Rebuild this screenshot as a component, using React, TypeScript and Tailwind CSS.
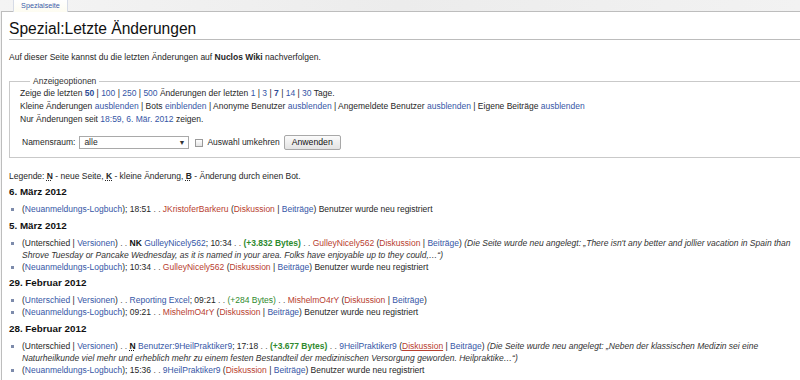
import React from "react"

const Blue = ({ children }: { children: React.ReactNode }) => (
  <a className="text-[#3556a6]">{children}</a>
)
const Red = ({ children, u }: { children: React.ReactNode; u?: boolean }) => (
  <a className={u ? "text-[#b8402f] underline" : "text-[#b8402f]"}>{children}</a>
)
const Sep = () => <span className="text-[#555]"> . . </span>

function Item({ children }: { children: React.ReactNode }) {
  return (
    <li className="flex">
      <span className="w-[13px] shrink-0">
        <span className="block w-[3px] h-[3px] ml-[2px] mt-[5px] bg-[#7d8bab]" />
      </span>
      <span className="whitespace-nowrap">{children}</span>
    </li>
  )
}

function Day({ title, children }: { title: string; children: React.ReactNode }) {
  return (
    <div>
      <h4 className="text-[9.8px] font-bold leading-[14px] mt-[3.5px] mb-[4px] text-[#111]">{title}</h4>
      <ul className="leading-[12px]">{children}</ul>
    </div>
  )
}

const Logbuch = ({ time, user, userRed = true }: { time: string; user: string; userRed?: boolean }) => (
  <Item>
    (<Blue>Neuanmeldungs-Logbuch</Blue>); {time}
    <Sep />
    {userRed ? <Red>{user}</Red> : <Blue>{user}</Blue>} (<Red>Diskussion</Red> | <Blue>Beiträge</Blue>) Benutzer wurde neu registriert
  </Item>
)

export default function App() {
  return (
    <div className="w-[800px] h-[380px] overflow-hidden bg-gradient-to-b from-[#f1f1f1] to-[#fafafa] font-['Liberation_Sans',Arial,sans-serif] text-[#262626]">
      <div className="h-[11px] flex bg-gradient-to-r from-[#f4f4f4] via-[#ececec] to-[#f2f2f2]">
        <div className="ml-[13px] w-[55px] h-[12px] bg-gradient-to-b from-white to-[#fdfcf1] border-x border-[#d6dbe6] flex items-center justify-center text-[7.2px] leading-none text-[#3a5ca8] relative z-10">
          Spezialseite
        </div>
      </div>
      <div className="ml-[1px] bg-white border-t border-l border-[#bdbdbd] pl-[7px] pt-[7px] h-[369px]">
        <h1 className="text-[15.6px] leading-[20px] text-[#111] border-b border-[#bcbcbc]">Spezial:Letzte Änderungen</h1>
        <p className="text-[8.5px] leading-[12px] mt-[11px]">
          Auf dieser Seite kannst du die letzten Änderungen auf <b>Nuclos Wiki</b> nachverfolgen.
        </p>
        <fieldset className="mt-[12px] mr-[-20px] border border-[#c9c9c9] text-[8.5px] leading-[13px] pl-[10px] pb-[6px]">
          <legend className="ml-[10px] px-[3px] leading-[12px] text-[#333]">Anzeigeoptionen</legend>
          <div>
            Zeige die letzten <b className="text-[#2c4a96]">50</b> | <Blue>100</Blue> | <Blue>250</Blue> | <Blue>500</Blue> Änderungen der letzten{" "}
            <Blue>1</Blue> | <Blue>3</Blue> | <b className="text-[#2c4a96]">7</b> | <Blue>14</Blue> | <Blue>30</Blue> Tage.
          </div>
          <div>
            Kleine Änderungen <Blue>ausblenden</Blue> | Bots <Blue>einblenden</Blue> | Anonyme Benutzer <Blue>ausblenden</Blue> | Angemeldete Benutzer{" "}
            <Blue>ausblenden</Blue> | Eigene Beiträge <Blue>ausblenden</Blue>
          </div>
          <div>
            Nur Änderungen seit <Blue>18:59, 6. Mär. 2012</Blue> zeigen.
          </div>
          <div className="flex items-center mt-[8.5px] h-[16px]">
            <span className="ml-[2px]">Namensraum:</span>
            <div className="ml-[4px] w-[110px] h-[13px] border border-[#a9a9a9] bg-white flex items-center justify-between pl-[4px] pr-[3px]">
              <span>alle</span>
              <span className="text-[7px] text-[#333]">▼</span>
            </div>
            <span className="ml-[6px] w-[8px] h-[8px] border border-[#9a9a9a] bg-gradient-to-b from-white to-[#e4e4e4]" />
            <span className="ml-[4px]">Auswahl umkehren</span>
            <button className="ml-[4px] h-[15px] px-[7px] border border-[#a8a8a8] rounded-[2px] bg-gradient-to-b from-[#fbfbfb] to-[#e3e3e3] text-[8.7px] leading-none text-[#111]">
              Anwenden
            </button>
          </div>
        </fieldset>
        <div className="text-[8.5px]">
          <p className="leading-[12px] mt-[12px]">
            Legende: <b className="underline decoration-dotted">N</b> - neue Seite, <b className="underline decoration-dotted">K</b> - kleine Änderung,{" "}
            <b className="underline decoration-dotted">B</b> - Änderung durch einen Bot.
          </p>
          <Day title="6. März 2012">
            <Logbuch time="18:51" user="JKristoferBarkeru" />
          </Day>
          <Day title="5. März 2012">
            <Item>
              (Unterschied | <Blue>Versionen</Blue>)<Sep /><b className="text-[#111]">NK</b> <Blue>GulleyNicely562</Blue>; 10:34
              <Sep />
              <b className="text-[#2e8a2e]">(+3.832 Bytes)</b>
              <Sep />
              <Red>GulleyNicely562</Red> (<Red>Diskussion</Red> | <Blue>Beiträge</Blue>){" "}
              <i className="text-[#333]">(Die Seite wurde neu angelegt: „There isn't any better and jollier vacation in Spain than</i>
              <br />
              <i className="text-[#333]">Shrove Tuesday or Pancake Wednesday, as it is named in your area. Folks have enjoyable up to they could,…“)</i>
            </Item>
            <Logbuch time="10:34" user="GulleyNicely562" />
          </Day>
          <Day title="29. Februar 2012">
            <Item>
              (<Blue>Unterschied</Blue> | <Blue>Versionen</Blue>)<Sep />
              <Blue>Reporting Excel</Blue>; 09:21
              <Sep />
              <span className="text-[#2e8a2e]">(+284 Bytes)</span>
              <Sep />
              <Red>MishelmO4rY</Red> (<Red>Diskussion</Red> | <Blue>Beiträge</Blue>)
            </Item>
            <Logbuch time="09:21" user="MishelmO4rY" />
          </Day>
          <Day title="28. Februar 2012">
            <Item>
              (Unterschied | <Blue>Versionen</Blue>)<Sep />
              <b className="text-[#111] underline decoration-dotted">N</b> <Blue>Benutzer:9HeilPraktiker9</Blue>; 17:18
              <Sep />
              <b className="text-[#2e8a2e]">(+3.677 Bytes)</b>
              <Sep />
              <Blue>9HeilPraktiker9</Blue> (<Red u>Diskussion</Red> | <Blue>Beiträge</Blue>){" "}
              <i className="text-[#333]">(Die Seite wurde neu angelegt: „Neben der klassischen Medizin sei eine</i>
              <br />
              <i className="text-[#333]">Naturheilkunde viel mehr und erheblich mehr zu einem festen Bestandteil der medizinischen Versorgung geworden. Heilpraktike…“)</i>
            </Item>
            <Logbuch time="15:36" user="9HeilPraktiker9" userRed={false} />
          </Day>
        </div>
      </div>
    </div>
  )
}
